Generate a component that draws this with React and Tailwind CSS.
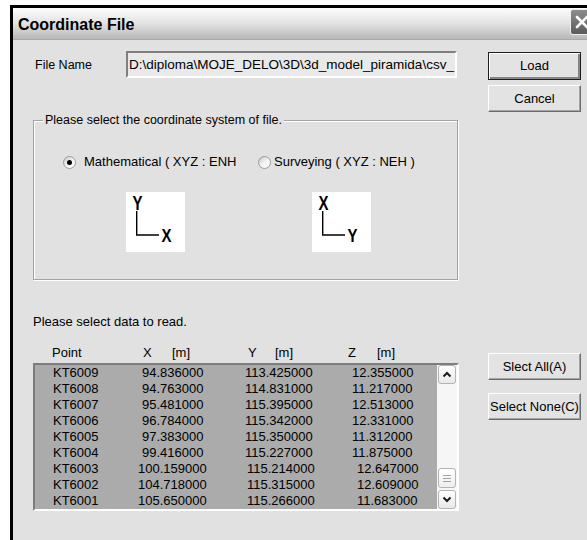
import React from "react";

const rows = [
  ["KT6009", "94.836000", "113.425000", "12.355000", "a"],
  ["KT6008", "94.763000", "114.831000", "11.217000", "a"],
  ["KT6007", "95.481000", "115.395000", "12.513000", "a"],
  ["KT6006", "96.784000", "115.342000", "12.331000", "a"],
  ["KT6005", "97.383000", "115.350000", "11.312000", "a"],
  ["KT6004", "99.416000", "115.227000", "11.875000", "a"],
  ["KT6003", "100.159000", "115.214000", "12.647000", "b"],
  ["KT6002", "104.718000", "115.315000", "12.609000", "b"],
  ["KT6001", "105.650000", "115.266000", "11.683000", "b"],
];

function Radio({ checked }) {
  return (
    <span className="w-[13px] h-[13px] shrink-0 rounded-full border border-[#9c9c9c] bg-linear-to-br from-[#c9c9c9] via-[#f2f2f2] to-white flex items-center justify-center">
      {checked && <span className="w-[5px] h-[5px] rounded-full bg-black" />}
    </span>
  );
}

function Axes({ top, right }) {
  return (
    <svg width="59" height="60" className="bg-white block">
      <text x="6.5" y="18" fontSize="20" fontWeight="bold" fontFamily="Liberation Sans, sans-serif" textLength="10" lengthAdjust="spacingAndGlyphs">{top}</text>
      <polyline points="10.7,19 10.7,43 33,43" fill="none" stroke="#000" strokeWidth="1.4" />
      <text x="35.5" y="50" fontSize="19" fontWeight="bold" fontFamily="Liberation Sans, sans-serif" textLength="10" lengthAdjust="spacingAndGlyphs">{right}</text>
    </svg>
  );
}

function Chevron({ down }) {
  return (
    <svg width="10" height="7" viewBox="0 0 10 7">
      <polyline points={down ? "1.5,1.5 5,5 8.5,1.5" : "1.5,5.5 5,2 8.5,5.5"} fill="none" stroke="#1c1c1c" strokeWidth="2" />
    </svg>
  );
}

function Btn({ children, primary, className = "" }) {
  const edge = primary
    ? "border border-[#1e1e1e] shadow-[inset_1px_1px_0_#ffffff,inset_-2px_-2px_0_#858585]"
    : "border border-t-white border-l-white border-r-[#6c6c6c] border-b-[#6c6c6c] shadow-[inset_-1px_-1px_0_#a4a4a4]";
  return (
    <div className={`w-[93px] h-[27px] bg-[#e3e3e3] flex items-center justify-center text-[13px] leading-[16px] text-black ${edge} ${className}`}>
      {children}
    </div>
  );
}

export default function App() {
  return (
    <div className="w-[587px] h-[540px] overflow-hidden bg-white font-['Liberation_Sans',Arial,sans-serif] text-black">
      <div className="ml-[10px] mt-[5px] w-[584px] h-[540px] border-t-[3px] border-l-[3px] border-black bg-white flex flex-col">
        {/* title bar */}
        <div className="h-[32px] shrink-0 rounded-tl-[6px] border-b border-[#a9a9a9] bg-linear-to-b from-[#fdfdfd] via-[#e2e2e2] to-[#b8b8b8] flex items-start">
          <div className="flex-1 pl-[5px] pt-[7px] text-[16px] leading-[20px] font-bold">Coordinate File</div>
          <div className="w-[24px] h-[26px] mt-[1px] rounded-[3px] border border-[#efefef] bg-linear-to-b from-[#8d8d8d] to-[#5c5c5c] flex items-center justify-center">
            <svg width="14" height="14" viewBox="0 0 14 14">
              <path d="M2 2 L12 12 M12 2 L2 12" stroke="#fff" strokeWidth="2.6" strokeLinecap="round" />
            </svg>
          </div>
        </div>

        {/* dialog body */}
        <div className="flex-1 bg-[#e1e1e1] flex pl-[20px]">
          <div className="w-[426px] pt-[11px] flex flex-col">
            <div className="flex items-center h-[27px]">
              <span className="w-[93px] pl-[2px] text-[12.5px] leading-[16px]">File Name</span>
              <div className="w-[331px] h-[27px] border-2 border-t-[#7f7f7f] border-l-[#7f7f7f] border-r-white border-b-white bg-[#e9e9e9] flex items-center pl-[1px] text-[13.5px] leading-[16px] whitespace-nowrap overflow-hidden">
                D:\diploma\MOJE_DELO\3D\3d_model_piramida\csv_
              </div>
            </div>

            {/* coordinate system group */}
            <div className="relative mt-[42px] w-[425px] h-[160px] border border-[#a3a3a3] shadow-[inset_1px_1px_0_#ffffff,1px_1px_0_#ffffff]">
              <span className="absolute left-[9px] top-[-9px] px-[2px] bg-[#e1e1e1] text-[12.5px] leading-[16px]">
                Please select the coordinate system of file.
              </span>
              <div className="pt-[33px] pl-[29px] flex items-center h-[49px] text-[13px] leading-[16px]">
                <Radio checked />
                <span className="ml-[8px] w-[174px] whitespace-nowrap">Mathematical ( XYZ : ENH</span>
                <Radio />
                <span className="ml-[3px] whitespace-nowrap">Surveying ( XYZ : NEH )</span>
              </div>
              <div className="mt-[22px] pl-[92px] flex gap-[127px]">
                <Axes top="Y" right="X" />
                <Axes top="X" right="Y" />
              </div>
            </div>

            <div className="mt-[34px] text-[13px] leading-[16px]">Please select data to read.</div>

            <div className="mt-[15px] flex text-[13px] leading-[16px] pl-[19px]">
              <span className="w-[91px]">Point</span>
              <span className="w-[29px]">X</span>
              <span className="w-[76px]">[m]</span>
              <span className="w-[27px]">Y</span>
              <span className="w-[73px]">[m]</span>
              <span className="w-[29px]">Z</span>
              <span>[m]</span>
            </div>

            {/* point list */}
            <div className="mt-[2px] w-[426px] h-[148px] border-2 border-t-[#7d7d7d] border-l-[#7d7d7d] border-r-white border-b-white flex">
              <div className="w-[402px] bg-[#ababab]">
                {rows.map(([p, x, y, z, v]) => (
                  <div key={p} className="flex h-[16px] items-center text-[13px] leading-[16px] whitespace-nowrap">
                    <span className={v === "a" ? "pl-[18px] w-[107px]" : "pl-[18px] w-[103px]"}>{p}</span>
                    <span className={v === "a" ? "w-[103px]" : "w-[109px]"}>{x}</span>
                    <span className={v === "a" ? "w-[107px]" : "w-[110px]"}>{y}</span>
                    <span>{z}</span>
                  </div>
                ))}
              </div>
              <div className="w-[20px] bg-[#f6f6f6] flex flex-col px-[1px]">
                <div className="h-[19px] rounded-[3px] border border-[#b3b3b3] bg-linear-to-b from-white to-[#e9e9e9] flex items-center justify-center">
                  <Chevron />
                </div>
                <div className="h-[20px] mt-auto mb-[2px] rounded-[3px] border border-[#b3b3b3] bg-linear-to-b from-white to-[#eeeeee] flex flex-col items-center justify-center gap-[2px]">
                  <span className="w-[8px] h-px bg-[#a2a2a2]" />
                  <span className="w-[8px] h-px bg-[#a2a2a2]" />
                  <span className="w-[8px] h-px bg-[#a2a2a2]" />
                </div>
                <div className="h-[19px] rounded-[3px] border border-[#b3b3b3] bg-linear-to-b from-white to-[#e9e9e9] flex items-center justify-center">
                  <Chevron down />
                </div>
              </div>
            </div>
          </div>

          {/* buttons */}
          <div className="ml-[29px] pt-[12px] flex flex-col">
            <Btn primary className="h-[28px]">Load</Btn>
            <Btn className="mt-[5px]">Cancel</Btn>
            <Btn className="mt-[241px]">Slect All(A)</Btn>
            <Btn className="mt-[13px]">Select None(C)</Btn>
          </div>
        </div>
      </div>
    </div>
  );
}
